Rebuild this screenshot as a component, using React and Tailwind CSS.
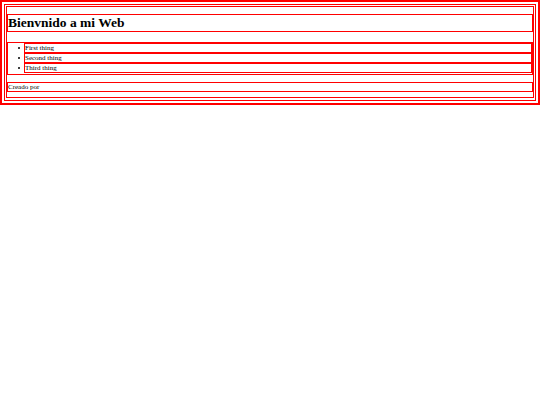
export default function App() {
  const items = ['First thing', 'Second thing', 'Third thing'];

  return (
    <div className="w-[540px] font-['Liberation_Serif',serif] text-black">
      <div className="border border-[#ff0000]">
        <div className="border border-[#ff0000] p-[2px]">
          <div className="border border-[#ff0000] px-px pt-px pb-[2px]">
            <div className="border border-[#ff0000] pb-[5px] pt-[7px]">
              <h1 className="border border-[#ff0000] text-[13.5px] font-bold leading-[16px]">
                Bienvnido a mi Web
              </h1>

              <ul className="mt-[10px] border border-[#ff0000] pb-px pl-[10px] text-[7px]">
                {items.map((item) => (
                  <li key={item} className="flex items-center">
                    <span className="mr-[4px] h-[2px] w-[2px] shrink-0 rounded-full bg-black" />
                    <span className="h-[10px] flex-1 border border-[#ff0000] leading-[8px]">{item}</span>
                  </li>
                ))}
              </ul>

              <footer className="mt-[7px] h-[10px] border border-[#ff0000] text-[7px] leading-[8px]">
                Creado por
              </footer>
            </div>
          </div>
        </div>
      </div>
    </div>
  );
}
